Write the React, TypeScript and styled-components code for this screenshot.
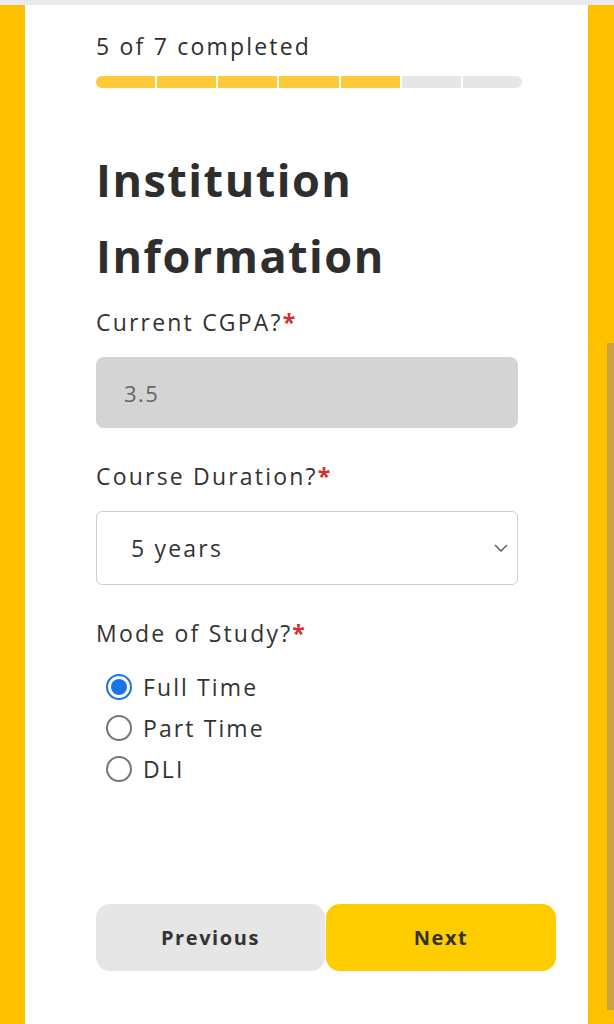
import React, { useState } from 'react'
import styled, { createGlobalStyle } from 'styled-components'

const GlobalStyle = createGlobalStyle`
  html, body {
    margin: 0;
    padding: 0;
    background: #ffc000;
  }
  * {
    box-sizing: border-box;
  }
`

const font = `'Open Sans', 'Noto Sans', sans-serif`

const Page = styled.div`
  display: flex;
  flex-direction: column;
  min-height: 100vh;
  border-top: 5px solid #e9eaee;
  background: #ffc000;
  padding: 0 26px 0 25px;
`

const Card = styled.main`
  flex: 1;
  background: #ffffff;
  padding: 26px 32px 0 71px;
  font-family: ${font};
  color: #333333;
`

const Column = styled.div`
  width: 422px;
`

const Progress = styled.div`
  font-size: 23px;
  line-height: 30px;
  color: #2f2f2f;
  letter-spacing: 2.2px;
`

const Bar = styled.div`
  display: flex;
  gap: 2px;
  width: 426px;
  height: 12px;
  margin-top: 15px;
  border-radius: 6px;
  overflow: hidden;
`

const Segment = styled.div<{ $done: boolean }>`
  flex: 1;
  background: ${(p) => (p.$done ? '#ffca3a' : '#e6e6e6')};
`

const Heading = styled.h1`
  margin: 54px 0 0;
  font-size: 45px;
  line-height: 76px;
  font-weight: 700;
  color: #2e2e2e;
  letter-spacing: 1.5px;
`

const Label = styled.div<{ $gap: number }>`
  margin-top: ${(p) => p.$gap}px;
  font-size: 23px;
  line-height: 30px;
  color: #333333;
  letter-spacing: 2.2px;
`

const Star = styled.span`
  color: #d32f2f;
  font-weight: 700;
  letter-spacing: 0;
`

const TextInput = styled.div`
  margin-top: 20px;
  height: 71px;
  display: flex;
  align-items: center;
  padding-left: 28px;
  background: #d4d4d4;
  border-radius: 8px;
  font-size: 22px;
  color: #666666;
  letter-spacing: 1.5px;
`

const Select = styled.div`
  margin-top: 20px;
  height: 74px;
  display: flex;
  align-items: center;
  justify-content: space-between;
  padding: 0 8px 0 34px;
  background: #ffffff;
  border: 1px solid #cfcfcf;
  border-radius: 6px;
  font-size: 23px;
  color: #333333;
  letter-spacing: 2.2px;
`

const Options = styled.div`
  margin-top: 18px;
  padding-left: 10px;
  display: flex;
  flex-direction: column;
`

const Option = styled.label`
  display: flex;
  align-items: center;
  gap: 11px;
  height: 41px;
  font-size: 23px;
  color: #333333;
  letter-spacing: 2.1px;
  cursor: pointer;
`

const Radio = styled.span<{ $checked: boolean }>`
  width: 26px;
  height: 26px;
  border-radius: 50%;
  border: 2px solid ${(p) => (p.$checked ? '#1a73e8' : '#767676')};
  display: flex;
  align-items: center;
  justify-content: center;

  &::after {
    content: '';
    width: 16px;
    height: 16px;
    border-radius: 50%;
    background: ${(p) => (p.$checked ? '#1a73e8' : 'transparent')};
  }
`

const Buttons = styled.div`
  margin-top: 115px;
  width: 460px;
  display: grid;
  grid-template-columns: 229px 1fr;
  gap: 1px;
`

const Button = styled.button<{ $primary?: boolean }>`
  height: 67px;
  border: none;
  border-radius: 14px;
  background: ${(p) => (p.$primary ? '#ffcc00' : '#e6e6e6')};
  font-family: ${font};
  font-size: 20px;
  font-weight: 700;
  color: #333333;
  letter-spacing: 1.6px;
  cursor: pointer;
`

const ScrollThumb = styled.div`
  position: fixed;
  right: 0;
  top: 343px;
  width: 7px;
  height: 667px;
  background: #c9a343;
`

const modes = ['Full Time', 'Part Time', 'DLI']

export default function App() {
  const [mode, setMode] = useState('Full Time')

  return (
    <>
      <GlobalStyle />
      <Page>
        <Card>
          <Column>
            <Progress>5 of 7 completed</Progress>
          </Column>
          <Bar>
            {Array.from({ length: 7 }).map((_, i) => (
              <Segment key={i} $done={i < 5} />
            ))}
          </Bar>
          <Column>
            <Heading>
              Institution
              <br />
              Information
            </Heading>

            <Label $gap={13}>
              Current CGPA?<Star>*</Star>
            </Label>
            <TextInput>3.5</TextInput>

            <Label $gap={33}>
              Course Duration?<Star>*</Star>
            </Label>
            <Select>
              5 years
              <svg width="16" height="10" viewBox="0 0 16 10">
                <path
                  d="M2 2 L8 8 L14 2"
                  fill="none"
                  stroke="#555"
                  strokeWidth="1.4"
                />
              </svg>
            </Select>

            <Label $gap={33}>
              Mode of Study?<Star>*</Star>
            </Label>
            <Options>
              {modes.map((m) => (
                <Option key={m} onClick={() => setMode(m)}>
                  <Radio $checked={mode === m} />
                  {m}
                </Option>
              ))}
            </Options>
          </Column>

          <Buttons>
            <Button>Previous</Button>
            <Button $primary={true}>Next</Button>
          </Buttons>
        </Card>
      </Page>
      <ScrollThumb />
    </>
  )
}
